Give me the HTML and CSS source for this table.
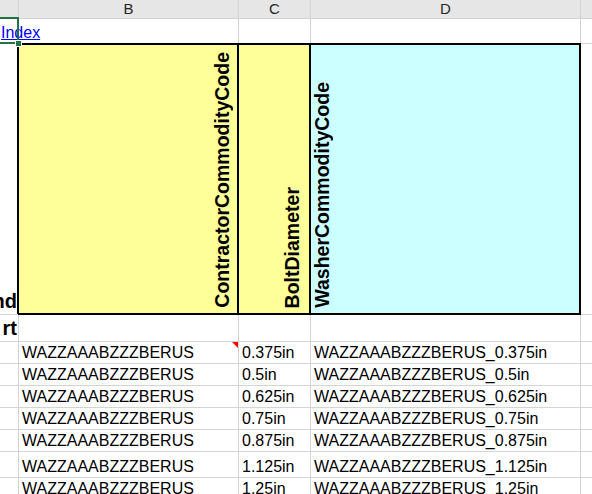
FILE: index.html
```html
<!DOCTYPE html>
<html>
<head>
<meta charset="utf-8">
<link rel="stylesheet" href="styles.css">
</head>
<body>
<div class="sheet">
  <div class="colhead"></div>
  <div class="colhead">B</div>
  <div class="colhead">C</div>
  <div class="colhead">D</div>
  <div class="colhead"></div>

  <div class="cell link-cell"><a class="link" href="#">Index</a></div>
  <div class="cell"></div>
  <div class="cell"></div>
  <div class="cell"></div>

  <div class="cell label-cell edge-left"><span class="bold">nd</span></div>
  <div class="cell hdr yellow hdr-b"><span class="vtext">ContractorCommodityCode</span></div>
  <div class="cell hdr yellow hdr-c"><span class="vtext">BoltDiameter</span></div>
  <div class="cell hdr cyan hdr-d"><span class="vtext">WasherCommodityCode</span></div>
  <div class="cell"></div>

  <div class="cell label-cell"><span class="bold">rt</span></div>
  <div class="cell"></div>
  <div class="cell"></div>
  <div class="cell"></div>
  <div class="cell"></div>

  <div class="cell"></div>
  <div class="cell data comment">WAZZAAABZZZBERUS</div>
  <div class="cell data">0.375in</div>
  <div class="cell data">WAZZAAABZZZBERUS_0.375in</div>
  <div class="cell"></div>

  <div class="cell"></div>
  <div class="cell data">WAZZAAABZZZBERUS</div>
  <div class="cell data">0.5in</div>
  <div class="cell data">WAZZAAABZZZBERUS_0.5in</div>
  <div class="cell"></div>

  <div class="cell"></div>
  <div class="cell data">WAZZAAABZZZBERUS</div>
  <div class="cell data">0.625in</div>
  <div class="cell data">WAZZAAABZZZBERUS_0.625in</div>
  <div class="cell"></div>

  <div class="cell"></div>
  <div class="cell data">WAZZAAABZZZBERUS</div>
  <div class="cell data">0.75in</div>
  <div class="cell data">WAZZAAABZZZBERUS_0.75in</div>
  <div class="cell"></div>

  <div class="cell"></div>
  <div class="cell data">WAZZAAABZZZBERUS</div>
  <div class="cell data">0.875in</div>
  <div class="cell data">WAZZAAABZZZBERUS_0.875in</div>
  <div class="cell"></div>

  <div class="cell"></div>
  <div class="cell data">WAZZAAABZZZBERUS</div>
  <div class="cell data">1.125in</div>
  <div class="cell data">WAZZAAABZZZBERUS_1.125in</div>
  <div class="cell"></div>

  <div class="cell"></div>
  <div class="cell data">WAZZAAABZZZBERUS</div>
  <div class="cell data">1.25in</div>
  <div class="cell data">WAZZAAABZZZBERUS_1.25in</div>
  <div class="cell"></div>

  <div class="selection"><span class="handle"></span></div>
</div>
</body>
</html>
```

FILE: styles.css
```css
html, body {
  margin: 0;
  padding: 0;
  background: #ffffff;
  overflow: hidden;
}

.sheet {
  position: relative;
  display: grid;
  grid-template-columns: 18px 219px 71px 269px 20px;
  grid-template-rows: 18px 24px 270px 26px 21px 21px 21px 21px 21px 25px 21px;
  gap: 1px;
  background: #d4d4d4;
  width: max-content;
  font-family: "Liberation Sans", Arial, sans-serif;
  font-size: 16px;
  color: #000;
}

.colhead {
  background: #e6e6e6;
  color: #262626;
  font-size: 15px;
  display: flex;
  align-items: center;
  justify-content: center;
  line-height: 18px;
}

.cell {
  background: #fff;
  display: flex;
  align-items: flex-end;
  overflow: hidden;
  white-space: nowrap;
  line-height: 18px;
  padding-bottom: 1px;
  box-sizing: border-box;
}

.link-cell {
  grid-column: 1 / 3;
  padding-left: 1px;
}

.link {
  color: #0000ff;
  text-decoration: underline;
}

.label-cell {
  justify-content: flex-end;
  padding-right: 1px;
  padding-bottom: 2px;
}

.edge-left {
  box-shadow: inset -1px 0 0 #000;
}

.bold {
  font-weight: bold;
  font-size: 20px;
  line-height: 22px;
}

.hdr {
  overflow: visible;
  position: relative;
  z-index: 1;
  box-shadow: 0 0 0 1px #000, inset -1px 1px 0 #000, inset 0 -1px 0 #000;
  padding-bottom: 6px;
}

.yellow { background: #ffff99; }
.cyan { background: #ccffff; }

.hdr-b { justify-content: flex-end; padding-right: 5px; }
.hdr-c { justify-content: flex-end; padding-right: 7px; }
.hdr-d { justify-content: flex-start; padding-left: 0; }

.vtext {
  writing-mode: vertical-rl;
  text-orientation: sideways;
  transform: rotate(180deg);
  font-weight: bold;
  font-size: 19.5px;
  line-height: 22px;
}

.data {
  padding-left: 3px;
}

.comment {
  position: relative;
}

.comment::after {
  content: "";
  position: absolute;
  top: 0;
  right: 0;
  border-top: 6px solid #ff0000;
  border-left: 6px solid transparent;
}

.selection {
  position: absolute;
  left: -6px;
  top: 17px;
  width: 25px;
  height: 27px;
  box-sizing: border-box;
  border: 2px solid #217346;
  z-index: 2;
}

.handle {
  position: absolute;
  right: -5px;
  bottom: -5px;
  width: 5px;
  height: 5px;
  background: #217346;
  border: 1px solid #fff;
}
```
